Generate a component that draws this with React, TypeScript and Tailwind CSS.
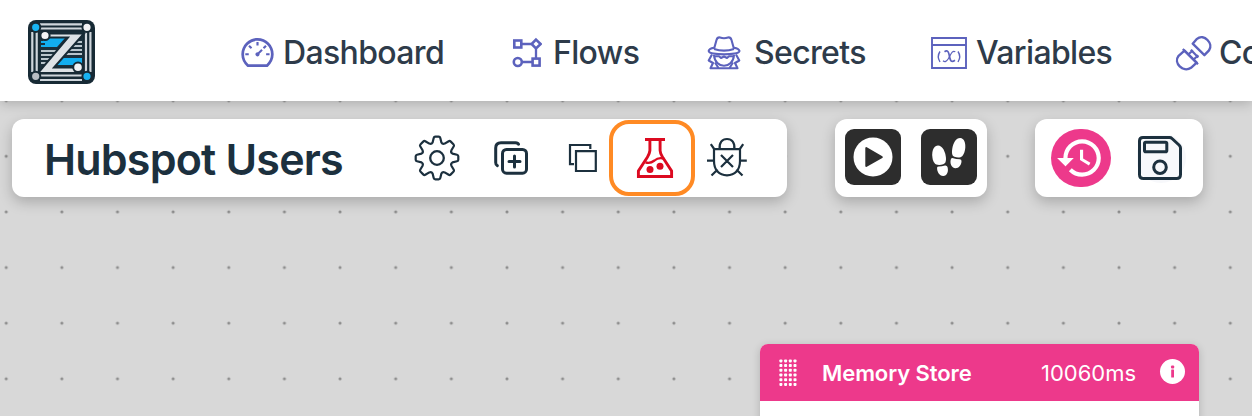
import React from "react";
import { AiOutlineDashboard } from "react-icons/ai";
import { MdHistory } from "react-icons/md";

type IconProps = { box: string; className?: string; children: React.ReactNode };

function Icon({ box, className = "", children }: IconProps) {
  return (
    <svg
      viewBox={box}
      className={`shrink-0 ${className}`}
      fill="none"
      stroke="currentColor"
      strokeWidth="2"
    >
      {children}
    </svg>
  );
}

function Logo() {
  return (
    <Icon box="0 0 67 64" className="h-16 w-[67px]">
      <rect width="67" height="64" rx="8" fill="#172a35" stroke="none" />
      <g stroke="#cfd6dc" strokeWidth="2.2">
        <path d="M12 4.3H54M12 8.5H54M12 55.5H54M12 60H54M4.3 12V52M8.7 12V52M58 12V52M62.4 12V52" />
      </g>
      <rect x="12" y="12" width="43" height="40" fill="#1b303c" stroke="none" />
      <path d="M13 31H32M13 35H29M13 39H26M13 43H23M35 34H54M38 30H54M42 26H54M47 22H54" stroke="#b9c5cc" strokeWidth="1.9" />
      <path d="M15 18H37L29 27H13V25H17V23H13V21H15Z" fill="#12aef0" stroke="none" />
      <path d="M34 38H54V45H27Z" fill="#12aef0" stroke="none" />
      <path d="M18 13.5H56L26 47.5H51V53H10L40 17.5H18Z" fill="#dde2e6" stroke="#172a35" strokeWidth="2" />
      <g stroke="#172a35" strokeWidth="2">
        <circle cx="7.7" cy="7.3" r="4.6" fill="#18b4f3" />
        <circle cx="59" cy="7.3" r="4.6" fill="#f2f3f5" />
        <circle cx="7.7" cy="56.3" r="4.6" fill="#b7bcc2" />
        <circle cx="59" cy="56.3" r="4.6" fill="#18b4f3" />
        <circle cx="17" cy="15.5" r="4.6" fill="#f2f3f5" />
        <circle cx="50" cy="47.3" r="4.8" fill="#f2f3f5" />
      </g>
    </Icon>
  );
}

function FlowIcon() {
  return (
    <Icon box="512 36 30 32" className="h-8 w-[30px]">
      <rect x="514.3" y="39.5" width="7" height="7" strokeWidth="2.6" />
      <rect x="532.6" y="57.6" width="7" height="7" strokeWidth="2.6" />
      <path d="M536 38.6L540.6 43L536 47.4L531.6 43Z" strokeWidth="2.6" />
      <circle cx="517.8" cy="61" r="4" strokeWidth="2.6" />
      <path d="M522 43H531M536 48V57M522 61H532" strokeWidth="2.3" />
    </Icon>
  );
}

function SpyIcon() {
  return (
    <Icon box="706 34 36 36" className="size-9">
      <g strokeWidth="2.1" strokeLinejoin="round">
        <path d="M714 48L716.5 39Q717.5 36 720 36.5Q724 38 728 36.5Q730.5 36 731.5 39L734 48" />
        <path d="M714 46.7Q709 47.5 708.7 50C709 54.5 739 54.5 739.5 50Q739 47.5 734 46.7M714 48C720 50 728 50 734 48" />
        <path d="M714 54C714.5 61 719 64.7 724 64.7S733.5 61 734 54M715 55.3H719L721 57L724 55.5L727 57L729 55.3H733" />
        <path d="M712 53.5L708.7 59.5L713 62L710.5 67.3H737.5L735 62L739.3 59.5L736 53.5M715 61.5L718.5 67M733 61.5L729.5 67" />
      </g>
    </Icon>
  );
}

function VariableIcon() {
  return (
    <Icon box="931 35 36 34" className="h-[34px] w-9">
      <path d="M932 37H966V67H932ZM932 44H966" strokeWidth="1.9" />
      <g strokeWidth="1.4">
        <path d="M940 50.5Q936.6 55.5 940 61M958 50.5Q961.4 55.5 958 61" />
        <path d="M944.5 50.7C948.5 48 949 53 949.6 56S951 62 955 59.3" strokeWidth="1.7" />
        <path d="M955.3 50.8C952 48.5 950.5 54.5 948.5 57.5S945 61.5 943 59.7" strokeWidth="1.2" />
      </g>
    </Icon>
  );
}

function PlugIcon() {
  return (
    <Icon box="1175 33 38 38" className="size-[38px]">
      <g strokeWidth="2.4" strokeLinejoin="round">
        <path d="M1192.7 42.7L1204.4 54.2L1209 49.4C1214 43 1204 32 1197 37.8Z" />
        <path d="M1184.5 49.6L1196.7 61.7L1191 66.8C1183 72 1173 62 1178.6 54.8Z" />
        <path d="M1182.8 48L1198 63.2M1188.5 53.2L1193 49.2M1193.6 58.5L1198.3 54.2M1190.8 48.8L1198.3 56.5" strokeWidth="2.2" />
      </g>
    </Icon>
  );
}

function GearIcon() {
  return (
    <Icon box="-23 -23 46 46" className="size-[46px]">
      <circle r="6.8" strokeWidth="2.3" />
      <path
        d="M-3.3 -20Q-3 -21.3 -1.7 -21.3H1.7Q3 -21.3 3.3 -20L4.4 -15.5Q5.5 -13.5 7.7 -14.4L11.7 -16.8Q12.8 -17.4 13.8 -16.4L16.4 -13.8Q17.4 -12.8 16.8 -11.7L14.4 -7.7Q13.5 -5.5 15.5 -4.4L20 -3.3Q21.3 -3 21.3 -1.7V1.7Q21.3 3 20 3.3L15.5 4.4Q13.5 5.5 14.4 7.7L16.8 11.7Q17.4 12.8 16.4 13.8L13.8 16.4Q12.8 17.4 11.7 16.8L7.7 14.4Q5.5 13.5 4.4 15.5L3.3 20Q3 21.3 1.7 21.3H-1.7Q-3 21.3 -3.3 20L-4.4 15.5Q-5.5 13.5 -7.7 14.4L-11.7 16.8Q-12.8 17.4 -13.8 16.4L-16.4 13.8Q-17.4 12.8 -16.8 11.7L-14.4 7.7Q-13.5 5.5 -15.5 4.4L-20 3.3Q-21.3 3 -21.3 1.7V-1.7Q-21.3 -3 -20 -3.3L-15.5 -4.4Q-13.5 -5.5 -14.4 -7.7L-16.8 -11.7Q-17.4 -12.8 -16.4 -13.8L-13.8 -16.4Q-12.8 -17.4 -11.7 -16.8L-7.7 -14.4Q-5.5 -13.5 -4.4 -15.5Z"
        strokeWidth="2.2"
        strokeLinejoin="round"
      />
    </Icon>
  );
}

function DuplicateIcon() {
  return (
    <Icon box="493 140 36 36" className="size-9">
      <g strokeWidth="3" strokeLinecap="round">
        <rect x="502.5" y="149.5" width="24" height="23.7" rx="4" />
        <path d="M518.5 144.2Q518 142.7 515.5 142.7H501Q495.7 142.7 495.7 148V162.5Q495.7 165 497.3 165.7" />
        <path d="M514.5 156V167M509 161.5H520" />
      </g>
    </Icon>
  );
}

function CopyIcon() {
  return (
    <Icon box="568 143 30 30" className="size-[30px]">
      <path d="M576 151.2H595.8V171H576ZM590.3 149V145H570V164.2H574" strokeWidth="2.2" />
    </Icon>
  );
}

function FlaskIcon() {
  return (
    <Icon box="636 137 38 42" className="h-[42px] w-[38px]">
      <g strokeWidth="2.9">
        <path d="M645 139.5H665M649.9 139.5V150.5Q649.5 154 647.5 157L638.4 171V176.5H671.6V171L662.5 157Q660.3 154 660.1 150.5V139.5" />
        <path d="M645.5 162.3Q650 164 654.5 160.5Q658.5 157 664 158.7" strokeWidth="2.3" />
      </g>
      <g fill="currentColor" stroke="none">
        <circle cx="650" cy="169.6" r="3.5" />
        <circle cx="660" cy="166.3" r="3.5" />
      </g>
    </Icon>
  );
}

function BugIcon() {
  return (
    <Icon box="706 137 42 42" className="size-[42px]">
      <path strokeWidth="2.2" d="M714 149.2H740V161C740 170 735 175.3 727 175.3S714 170 714 161ZM719.7 149C719 142.5 722 139 727 139S735 142.5 734.3 149M707 160.7H714M740 160.7H746.8M714.5 149.5L710.8 144.2M739.5 149.5L743.2 144.2M717.6 169.5L711.5 175.5M736.4 169.5L742.5 175.5M721 155L733 167M733 155L721 167" />
    </Icon>
  );
}

function SaveIcon() {
  return (
    <Icon box="1137 135 50 48" className="h-12 w-[50px]">
      <circle cx="1161" cy="158" r="25" fill="#f7f8fb" stroke="none" />
      <g strokeWidth="3">
        <path d="M1143 137.5H1169.5Q1171 137.5 1172 138.5L1179 145Q1180.5 146.5 1180.5 148V174.5Q1180.5 178.5 1176.5 178.5H1143.5Q1139.5 178.5 1139.5 174.5V141Q1139.5 137.5 1143 137.5Z" />
        <rect x="1144.5" y="142.2" width="22.3" height="9.5" rx="1.3" />
        <circle cx="1160" cy="167.2" r="6.3" />
      </g>
    </Icon>
  );
}

function PlayIcon() {
  return (
    <Icon box="0 0 56 56" className="size-14">
      <circle cx="28" cy="28" r="19.5" fill="#fff" stroke="none" />
      <path d="M21.3 19V37L36.8 28.2Z" fill="#2d2d2d" stroke="#2d2d2d" strokeWidth="2" strokeLinejoin="round" />
    </Icon>
  );
}

function FootstepsIcon() {
  return (
    <Icon box="921 129 56 56" className="size-14">
      <g fill="#fff" stroke="none">
        <path d="M938 145.4C942.5 145.4 946 152.5 946 159Q946 163.2 943.2 164.3Q939.5 165.7 936.3 164.6C933.5 163.5 932.2 158.5 932.2 154.5C932.2 149.5 934.5 145.5 938 145.4Z" />
        <path d="M937.1 167.6Q937.3 166.5 938.8 166.4Q942 166.3 945 165.4Q947 165.2 947.5 167C948.8 171.5 947.2 175.8 943.2 176C939.2 176 936.8 171.5 937.1 167.6Z" />
        <path d="M960.3 137.9C964 138.1 965.7 142.5 965.3 147.5C965 152.5 962.8 156.7 960.5 157.2Q957.5 157.9 954.4 156.8C951.8 155.8 951.7 152.5 952.3 148.5C953.2 142.5 956.3 137.7 960.3 137.9Z" />
        <path d="M951.2 158.4Q951.8 157.6 953.2 158.2Q956 159.2 959.8 159.2Q961.5 159.4 961.5 161C961.5 165 959 168.2 955.5 168.2C951.5 168.2 949.2 162.5 951.2 158.4Z" />
      </g>
    </Icon>
  );
}

function GripIcon() {
  const rows = [0, 1, 2, 3, 4, 5];
  const cols = [0, 1, 2, 3];
  return (
    <Icon box="779 359 20 28" className="h-7 w-5">
      <g fill="#fff" stroke="none">
        {rows.map((r) =>
          cols.map((c) => (
            <rect key={`${r}-${c}`} x={779.4 + c * 4.7} y={359.4 + r * 4.7} width="3" height="3" rx="0.8" />
          )),
        )}
      </g>
    </Icon>
  );
}

function NavItem({ icon, label, className }: { icon: React.ReactNode; label: string; className: string }) {
  return (
    <a className={`flex shrink-0 items-center ${className}`}>
      {icon}
      <span className="whitespace-nowrap">{label}</span>
    </a>
  );
}

export default function App() {
  return (
    <div className="flex h-[416px] w-[1252px] flex-col overflow-hidden bg-[#d8d8d8] font-['Inter',sans-serif]">
      <header className="z-10 flex h-[101px] shrink-0 items-center bg-white pl-7 pt-1.5 shadow-[0_2px_12px_rgba(0,0,0,0.22)]">
        <div className="mb-[-3px] flex h-[71px] w-[211px] shrink-0">
          <Logo />
        </div>
        <nav className="flex h-[72px] items-center pb-0.5 text-[32px] font-medium tracking-[-0.65px] text-[#2e3b4a] [&_svg]:text-[#5c62bd]">
          <NavItem className="w-[273px] gap-[7px]" icon={<AiOutlineDashboard className="size-[37px] shrink-0" />} label="Dashboard" />
          <NavItem className="w-[194px] gap-[11px]" icon={<FlowIcon />} label="Flows" />
          <NavItem className="w-[225px] gap-3" icon={<SpyIcon />} label="Secrets" />
          <NavItem className="w-[244px] gap-[9px]" icon={<VariableIcon />} label="Variables" />
          <NavItem className="w-[260px] gap-[6px]" icon={<PlugIcon />} label="Connections" />
        </nav>
      </header>

      <main className="relative flex flex-1 flex-col">
        <svg className="absolute inset-0 size-full">
          <defs>
            <pattern id="dots" x="-21.6" y="-0.4" width="55.64" height="55.64" patternUnits="userSpaceOnUse">
              <circle cx="27.82" cy="55.64" r="1.55" fill="#8d8d8d" />
              <circle cx="27.82" cy="0" r="1.55" fill="#8d8d8d" />
            </pattern>
          </defs>
          <rect width="100%" height="100%" fill="url(#dots)" />
        </svg>

        <div className="relative flex pl-3 pt-[18px] text-[#1c303e]">
          <section className="flex h-[78px] w-[775px] items-center rounded-xl bg-white pl-8 shadow-[0_5px_14px_rgba(0,0,0,0.22)]">
            <h1 className="w-[370px] shrink-0 whitespace-nowrap pt-0.5 text-[43px] font-semibold leading-none tracking-[-0.8px]">
              Hubspot Users
            </h1>
            <GearIcon />
            <div className="ml-[33px]"><DuplicateIcon /></div>
            <div className="ml-[39px]"><CopyIcon /></div>
            <div className="ml-[11px] flex h-[76px] w-[86px] shrink-0 items-center justify-center rounded-[20px] border-4 border-[#ff8a24] pl-[5px] text-[#dc0a20]">
              <FlaskIcon />
            </div>
            <div className="ml-[11px]"><BugIcon /></div>
          </section>

          <section className="ml-12 flex h-[78px] w-[152px] items-center gap-5 rounded-xl bg-white pb-0.5 pl-2.5 shadow-[0_5px_14px_rgba(0,0,0,0.22)]">
            <button className="size-14 rounded-[9px] bg-[#2d2d2d]"><PlayIcon /></button>
            <button className="size-14 rounded-[9px] bg-[#2d2d2d]"><FootstepsIcon /></button>
          </section>

          <section className="ml-12 flex h-[78px] w-[168px] items-center gap-[26px] rounded-xl bg-white pl-4 shadow-[0_5px_14px_rgba(0,0,0,0.22)]">
            <button className="flex h-[58px] w-[60px] items-center justify-center rounded-full bg-[#ed398b] pr-0.5 text-white">
              <MdHistory className="size-[50px]" />
            </button>
            <div className="pt-0.5"><SaveIcon /></div>
          </section>
        </div>

        <article className="absolute left-[760px] top-[243px] flex h-[120px] w-[439px] flex-col overflow-hidden rounded-lg bg-white shadow-[0_2px_8px_rgba(0,0,0,0.18)]">
          <div className="flex h-[57px] shrink-0 items-center bg-[#ed398b] pl-[19px] text-[22px] text-white">
            <GripIcon />
            <span className="ml-[23px] w-[219px] whitespace-nowrap pt-0.5 font-semibold tracking-[-0.08px]">Memory Store</span>
            <span className="w-[119px] pt-0.5">10060ms</span>
            <span className="mb-[3px] flex size-[25px] items-center justify-center rounded-full bg-white">
              <svg viewBox="0 0 25 25" className="size-[25px] text-[#ed398b]" fill="currentColor">
                <rect x="11" y="6.6" width="3.2" height="2.8" rx="1" />
                <rect x="11.2" y="10.4" width="2.8" height="8" rx="0.5" />
              </svg>
            </span>
          </div>
        </article>
      </main>
    </div>
  );
}
